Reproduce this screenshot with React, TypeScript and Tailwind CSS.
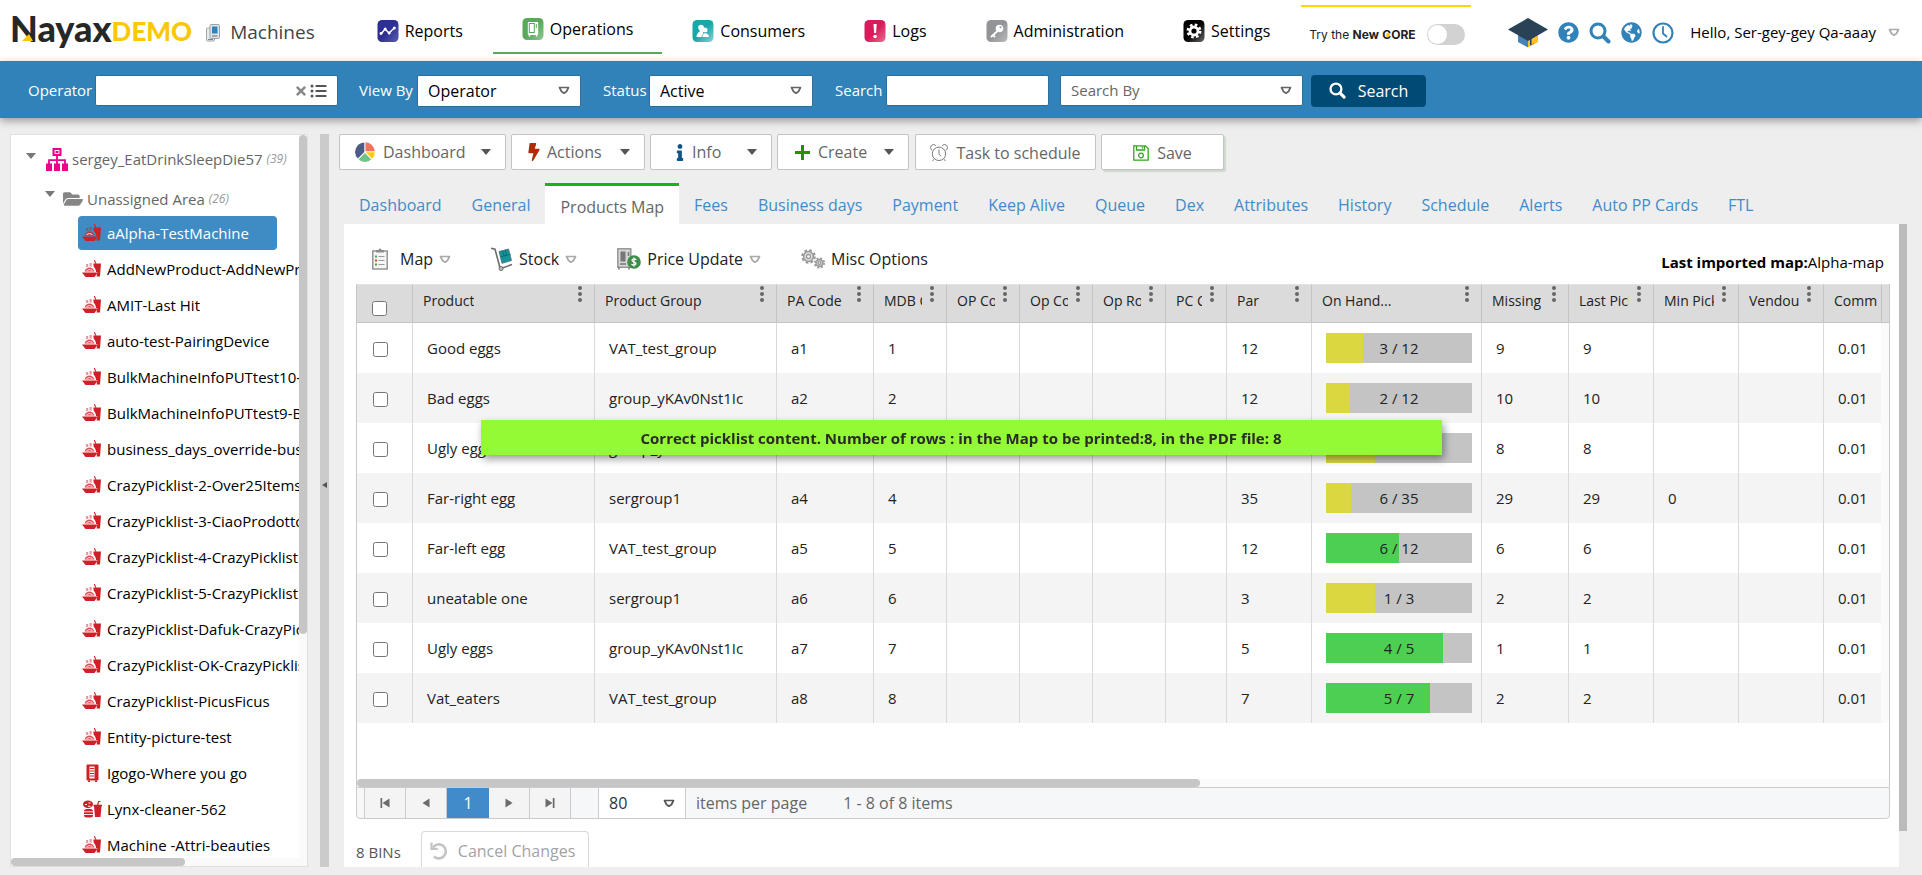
import React from "react";
import { FaBolt, FaFolderOpen, FaGlobeAmericas, FaInfo, FaListUl, FaQuestionCircle, FaTimes } from "react-icons/fa";

type SvgProps = { className?: string };

/* ---------- small shared drawings ---------- */

const CaretOutline = ({ className = "" }: SvgProps) => (
  <svg viewBox="0 0 12 9" className={`h-[9px] w-3 ${className}`} fill="none" stroke="currentColor" strokeWidth="1.7" strokeLinejoin="round" aria-hidden="true">
    <path d="M1.500 1.500h9L8.500 5.500 6 7.200 3.500 5.500z" />
  </svg>
);

const CaretSolid = ({ className = "" }: SvgProps) => (
  <svg viewBox="0 0 10 6" className={`h-1.5 w-2.5 ${className}`} fill="currentColor" aria-hidden="true">
    <path d="M0 0h10L5 6z" />
  </svg>
);

const Magnifier = ({ className = "" }: SvgProps) => (
  <svg viewBox="0 0 22 22" className={className} fill="none" stroke="currentColor" strokeLinecap="round" aria-hidden="true">
    <circle cx="9" cy="9" r="7" strokeWidth="3" />
    <path d="M14.500 14.500l5 5" strokeWidth="4" />
  </svg>
);

const ClockIcon = ({ className = "" }: SvgProps) => (
  <svg viewBox="0 0 22 22" className={className} fill="none" stroke="currentColor" aria-hidden="true">
    <circle cx="11" cy="11" r="9.500" strokeWidth="2.200" />
    <path d="M11 5v6.500l3.500 3" strokeWidth="1.800" strokeLinecap="round" />
  </svg>
);

const GradCap = () => (
  <svg viewBox="0 0 40 30" className="h-[30px] w-10" aria-hidden="true">
    <path d="M10 14v10l10 5.500V18z" fill="#4482b8" />
    <path d="M30 14v10l-10 5.500V18z" fill="#f7c427" />
    <path d="M22 20.500l4-2v7l-4 2z" fill="#2a4256" />
    <path d="M23.500 20.500l4-2v6l-4 2z" fill="#f7c427" />
    <path d="M20 0l20 11.500L20 23 0 11.500z" fill="#2a4256" />
  </svg>
);

const MachinesIcon = () => (
  <svg viewBox="0 0 14 18" className="h-[18px] w-3.5" aria-hidden="true">
    <rect x="0.500" y="4" width="8" height="13" rx="1" fill="#e6ebee" stroke="#a2a8ac" />
    <path d="M2 15.500h5" stroke="#7d868c" />
    <rect x="4" y="0.500" width="9.500" height="14" rx="1.200" fill="#dfe5e9" stroke="#9aa3a9" />
    <rect x="6" y="2.500" width="5.500" height="7" fill="#2b83c0" />
    <path d="M6 12h5.500" stroke="#7d868c" strokeWidth="1.300" />
  </svg>
);

/* ---------- top navigation tiles ---------- */

const Tile = ({ id, from, to, children }: { id: string; from: string; to: string; children: React.ReactNode }) => (
  <svg viewBox="0 0 22 22" className="size-[22px] shrink-0" aria-hidden="true">
    <defs>
      <linearGradient id={id} x1="0" y1="0" x2="1" y2="1">
        <stop offset="0.500" stopColor={from} />
        <stop offset="1" stopColor={to} />
      </linearGradient>
    </defs>
    <rect x="0.500" y="0" width="21" height="22" rx="4.500" fill={`url(#${id})`} />
    {children}
  </svg>
);

const navItems = [
  {
    label: "Reports",
    icon: (
      <Tile id="reports" from="#2d2f92" to="#5a5cae">
        <path d="M4 14l4-5 4 4 5.300-5" fill="none" stroke="#fff" strokeWidth="1.500" />
        <circle cx="4" cy="13.500" r="1.400" fill="#fff" />
        <circle cx="8.200" cy="8.900" r="1.500" fill="#fff" />
        <circle cx="12.200" cy="13" r="1.500" fill="#fff" />
        <circle cx="17.300" cy="8" r="1.500" fill="#fff" />
      </Tile>
    ),
  },
  {
    label: "Operations",
    active: true,
    icon: (
      <Tile id="operations" from="#58a95b" to="#8fc891">
        <rect x="5.800" y="4" width="10.400" height="13" rx="1" fill="#fff" />
        <rect x="7.300" y="5.500" width="5" height="9" fill="none" stroke="#58a95b" strokeWidth="1" />
        <path d="M14.300 6v4" stroke="#58a95b" strokeWidth="1" />
        <path d="M7.500 17v1.500M14.500 17v1.500" stroke="#fff" strokeWidth="1.500" />
      </Tile>
    ),
  },
  {
    label: "Consumers",
    icon: (
      <Tile id="consumers" from="#17a7a7" to="#8ad3d3">
        <circle cx="9" cy="7.500" r="2.800" fill="#fff" />
        <path d="M4.500 17c0-3.500 2-5 3.200-5.600L7.500 9h3l.5 3 1 5z" fill="#fff" />
        <circle cx="13" cy="10" r="2.500" fill="#fff" />
        <path d="M10 17.500c0-3 1.500-4 2.200-4.500h2c1.800.7 3.300 2 3.300 4.500z" fill="#fff" stroke="#17a7a7" strokeWidth="0.600" />
      </Tile>
    ),
  },
  {
    label: "Logs",
    icon: (
      <Tile id="logs" from="#d91a5b" to="#e8708c">
        <path d="M9.500 4h3.200l-.6 9h-2z" fill="#fff" />
        <circle cx="11.100" cy="16.500" r="1.800" fill="#fff" />
      </Tile>
    ),
  },
  {
    label: "Administration",
    icon: (
      <Tile id="administration" from="#929497" to="#babcbe">
        <circle cx="13.500" cy="8.500" r="3.800" fill="#fff" />
        <circle cx="14.500" cy="7.300" r="1" fill="#929497" />
        <path d="M11.500 11l-6 5.500M7 15l1.500 1.500" stroke="#fff" strokeWidth="1.900" strokeLinecap="round" />
      </Tile>
    ),
  },
  {
    label: "Settings",
    icon: (
      <Tile id="settings" from="#000000" to="#6a6a6a">
        <circle cx="11" cy="11" r="6.200" fill="none" stroke="#fff" strokeWidth="2.600" strokeDasharray="2.600 2.270" />
        <circle cx="11" cy="11" r="4" fill="none" stroke="#fff" strokeWidth="2.800" />
      </Tile>
    ),
  },
];

const Header = () => (
  <header className="flex h-[61px] shrink-0 items-start bg-white text-black">
    <a href="#home" className="flex h-14 items-center pl-2.5 font-[Lato] font-black leading-none" aria-label="Nayax DEMO">
      <span className="relative text-[36px] text-[#272727]">
        Nayax
        <svg viewBox="0 0 11 7" className="absolute bottom-[5px] left-3 h-[7px] w-[11px]" aria-hidden="true">
          <path d="M0 7l7-7 4 7z" fill="#fbc707" />
        </svg>
      </span>
      <span className="pt-1.5 text-[26px] text-[#fbc707]">DEMO</span>
    </a>
    <div className="flex h-[61px] items-center gap-2.5 pl-3.5 pt-1 text-[19px] text-[#444]">
      <MachinesIcon />
      <h1>Machines</h1>
    </div>
    <nav className="flex items-start gap-px pl-[33px]">
      {navItems.map((item) =>
        item.active ? (
          <a key={item.label} href="#operations" className="flex h-[54px] items-center gap-1.5 border-b-2 border-[#58a95b] px-[29px] pt-1.5" aria-current="page">
            {item.icon}
            {item.label}
          </a>
        ) : (
          <a key={item.label} href={`#${item.label}`} className="flex h-[61px] items-center gap-1.5 px-[29px]">
            {item.icon}
            {item.label}
          </a>
        ),
      )}
    </nav>
    <div className="ml-auto flex items-start">
      <label className="mt-[5px] flex h-[54px] w-[170px] items-center justify-between border-t-2 border-[#fdd500] pl-2 pr-1.5 pt-0.5 font-[Inter] text-[12px] text-[#222]">
        <span className="whitespace-nowrap pt-0.5">
          Try the <b>New</b>{" "}
          <b className="relative">
            CORE
            <svg viewBox="0 0 4 4" className="absolute left-1 top-1.5 size-1" aria-hidden="true"><circle cx="2" cy="2" r="2" fill="#fdc500" /></svg>
          </b>
        </span>
        <input type="checkbox" role="switch" className="peer sr-only" />
        <span className="flex h-[21px] w-[38px] items-center rounded-full bg-[#d2d2d2] px-px">
          <span className="size-[19px] rounded-full bg-white" />
        </span>
      </label>
      <div className="flex h-[61px] items-center gap-2.5 pl-[37px] pt-1 text-[#3182b9]">
        <a href="#academy" aria-label="Academy"><GradCap /></a>
        <a href="#help" aria-label="Help"><FaQuestionCircle className="size-[21px]" /></a>
        <a href="#find" aria-label="Find"><Magnifier className="size-[22px]" /></a>
        <a href="#language" aria-label="Language"><FaGlobeAmericas className="size-[21px]" /></a>
        <a href="#time" aria-label="Time"><ClockIcon className="size-[22px]" /></a>
      </div>
      <button type="button" className="flex h-[61px] items-center gap-3 whitespace-nowrap pl-4 pr-[22px] pt-1 text-[15px]">
        Hello, Ser-gey-gey Qa-aaay
        <CaretOutline className="text-[#aaa]" />
      </button>
    </div>
  </header>
);

/* ---------- blue filter bar ---------- */

const FilterSelect = ({ id, value, className }: { id: string; value: string; className: string }) => (
  <span className={`relative flex items-center rounded-xs border border-[#2a6f9f] bg-white ${className}`}>
    <select id={id} defaultValue={value} aria-label={value} className="h-full w-full appearance-none bg-transparent pl-2.5 pr-8">
      <option>{value}</option>
    </select>
    <CaretOutline className="pointer-events-none absolute right-2.5 text-[#666]" />
  </span>
);

const FilterBar = () => (
  <form className="z-10 flex h-[57px] shrink-0 items-center bg-[#3182b9] pl-7 pt-0.5 text-[15px] text-white shadow-[0_3px_8px_rgba(0,0,0,0.35)]" onSubmit={(e) => e.preventDefault()}>
    <label htmlFor="operator" className="w-[67px]">Operator</label>
    <span className="relative flex h-[31px] w-[243px] items-center rounded-xs border border-[#2a6f9f] bg-white text-black">
      <input id="operator" className="h-full w-full px-2.5 pr-12 outline-none" />
      <span className="absolute right-2.5 flex items-center gap-0.5 text-[#8a8a8a]">
        <button type="button" aria-label="Clear"><FaTimes className="size-[14px]" /></button>
        <button type="button" aria-label="Choose operator" className="text-[#555]"><FaListUl className="h-4 w-[17px]" /></button>
      </span>
    </span>
    <label htmlFor="viewby" className="ml-[21px] w-[58px]">View By</label>
    <FilterSelect id="viewby" value="Operator" className="h-8 w-[164px] text-[16px] text-black" />
    <label htmlFor="status" className="ml-[22px] w-[46px]">Status</label>
    <FilterSelect id="status" value="Active" className="h-8 w-[164px] text-[16px] text-black" />
    <label htmlFor="search" className="ml-[22px] w-[51px]">Search</label>
    <input id="search" className="h-[31px] w-[163px] rounded-xs border border-[#2a6f9f] bg-white px-2.5 text-black" />
    <FilterSelect id="searchby" value="Search By" className="ml-[11px] h-[31px] w-[243px] text-[#666]" />
    <button type="submit" className="ml-2 flex h-8 w-[115px] items-center justify-center gap-3 rounded-sm bg-[#004b76] text-[16px]">
      <Magnifier className="size-[17px]" />
      Search
    </button>
  </form>
);

/* ---------- machine tree ---------- */

const SnackIcon = () => (
  <svg viewBox="0 0 20 18" className="h-[18px] w-5 shrink-0" fill="#cf2027" aria-hidden="true">
    <path d="M0 12.500h16l-3.500 4.500h-9z" />
    <path d="M2.500 11.500c1-3 3-4 5-4s4 1.500 5 4z" fillOpacity="0.800" />
    <path d="M4 4h2.200v3H4zM7.500 3h2.200v3.500H7.500z" fillOpacity="0.450" />
    <path d="M11.300 3.500h7.700l-1 13h-3.500l1-4.500h-1.500c0-2.500-1-4-2.200-5z" />
    <path d="M12.300 0l1.500 3.500" stroke="#cf2027" strokeWidth="1.100" />
    <path d="M4.500 10.500q3-2 6 0" stroke="#fff" strokeWidth="0.900" fill="none" />
  </svg>
);

const CabinetIcon = () => (
  <svg viewBox="0 0 20 18" className="h-[18px] w-5 shrink-0" aria-hidden="true">
    <rect x="4.500" y="0.500" width="12" height="16" rx="1" fill="#cf2027" />
    <path d="M7 16.500v1.500M14 16.500v1.500" stroke="#cf2027" strokeWidth="2" />
    <rect x="7.500" y="2.500" width="5" height="12" fill="#fff" />
    <path d="M8 4.500h4M8 7h4M8 9.500h4M8 12h4" stroke="#cf2027" strokeWidth="1" />
  </svg>
);

const CoffeeSnackIcon = () => (
  <svg viewBox="0 0 20 18" className="h-[18px] w-5 shrink-0" aria-hidden="true">
    <ellipse cx="6" cy="4.300" rx="5" ry="3.900" fill="#cf2027" />
    <path d="M3 4.500h2M6.500 3h2M6 6.200h2.500" stroke="#fff" strokeWidth="1.100" />
    <rect x="2" y="9" width="9" height="8.500" rx="2.500" fill="#cf2027" />
    <path d="M2 11.800h9M2 14.500h9" stroke="#fff" strokeWidth="0.900" />
    <path d="M12 6h7.500l-1 11h-5.500z" fill="#cf2027" />
    <path d="M15.500 6l1-4.500h2" stroke="#cf2027" strokeWidth="1.200" fill="none" />
    <path d="M11.500 4.700h8.500v1.500h-8.500z" fill="#cf2027" />
  </svg>
);

const machines: { name: string; icon?: "cabinet" | "coffee"; selected?: boolean }[] = [
  { name: "aAlpha-TestMachine", selected: true },
  { name: "AddNewProduct-AddNewProduct" },
  { name: "AMIT-Last Hit" },
  { name: "auto-test-PairingDevice" },
  { name: "BulkMachineInfoPUTtest10-BulkMachine" },
  { name: "BulkMachineInfoPUTtest9-BulkMachine" },
  { name: "business_days_override-business" },
  { name: "CrazyPicklist-2-Over25Items" },
  { name: "CrazyPicklist-3-CiaoProdotto" },
  { name: "CrazyPicklist-4-CrazyPicklist" },
  { name: "CrazyPicklist-5-CrazyPicklist" },
  { name: "CrazyPicklist-Dafuk-CrazyPicklist" },
  { name: "CrazyPicklist-OK-CrazyPicklist" },
  { name: "CrazyPicklist-PicusFicus" },
  { name: "Entity-picture-test" },
  { name: "Igogo-Where you go", icon: "cabinet" },
  { name: "Lynx-cleaner-562", icon: "coffee" },
  { name: "Machine -Attri-beauties" },
];

const Sidebar = () => (
  <aside className="flex w-[298px] shrink-0 flex-col border border-[#e0e0e0] bg-white">
    <div className="flex min-h-0 flex-1">
      <div className="min-w-0 flex-1 overflow-hidden whitespace-nowrap text-[15px]">
        <div className="flex h-[46px] items-center pl-[15px] pt-0.5 text-[#666]">
          <CaretSolid className="mb-1.5 mr-2.5 text-[#777]" />
          <svg viewBox="0 0 22 23" className="h-[23px] w-[22px]" aria-hidden="true">
            <path d="M6.500 0h9v8h-9zM0 15.500h6V23H0zM8 15.500h6V23H8zM16 15.500h6V23h-6z" fill="#ec008c" />
            <path d="M11 8v8M3 16v-3.800h16V16" fill="none" stroke="#ec008c" strokeWidth="1.800" />
            <path d="M9 2.500h4v3H9z" fill="none" stroke="#fff" strokeWidth="1" />
          </svg>
          <span className="ml-1">sergey_EatDrinkSleepDie57</span>
          <i className="ml-1 text-[12px] text-[#999]">(39)</i>
        </div>
        <div className="flex h-[34px] items-center pl-[34px] pt-0.5 text-[#666]">
          <CaretSolid className="mb-2.5 mr-2 text-[#777]" />
          <FaFolderOpen className="h-[18px] w-5 text-[#858585]" />
          <span className="ml-1">Unassigned Area</span>
          <i className="ml-1 text-[12px] text-[#999]">(26)</i>
        </div>
        <ul className="pl-[67px]">
          {machines.map((m) => (
            <li key={m.name} className="flex h-9 items-center">
              <a
                href={`#${m.name}`}
                className={
                  m.selected
                    ? "flex h-[34px] w-[199px] items-center gap-[5px] rounded-sm bg-[#3f8bc4] pl-1 text-white"
                    : "flex h-[34px] items-center gap-[5px] pl-1 text-black"
                }
              >
                {m.icon === "cabinet" ? <CabinetIcon /> : m.icon === "coffee" ? <CoffeeSnackIcon /> : <SnackIcon />}
                {m.name}
              </a>
            </li>
          ))}
        </ul>
      </div>
      <div className="w-2 shrink-0 bg-[#fafafa]">
        <div className="h-[69%] rounded-t-sm rounded-b-sm bg-[#c6c6c6]" />
      </div>
    </div>
    <div className="h-2 shrink-0 bg-[#fafafa]">
      <div className="h-2 w-[174px] rounded-sm bg-[#c6c6c6]" />
    </div>
  </aside>
);

/* ---------- action buttons ---------- */

const PieIcon = () => (
  <svg viewBox="0 0 20 20" className="size-5" aria-hidden="true">
    <path d="M9.300 10V0.500A9.500 9.500 0 0 0 2.900 16.600z" fill="#4d5b86" />
    <path d="M10.500 9.300V0.300a9.500 9.500 0 0 1 9.200 9z" fill="#f0745a" />
    <path d="M10.800 10.300h9a9 9 0 0 1-2.700 6.500z" fill="#fbc916" />
    <path d="M9.900 11l6.400 6.500a9.500 9.500 0 0 1-12.700.1z" fill="#6cc486" />
  </svg>
);

const AlarmIcon = () => (
  <svg viewBox="0 0 18 18" className="size-[18px]" fill="none" stroke="#7a7a7a" strokeWidth="1" aria-hidden="true">
    <circle cx="9" cy="9.800" r="6.700" />
    <path d="M9 5.500v4.800l2 1.800M4 15.200L2.500 17M14 15.200l1.500 1.800" />
    <path d="M1.200 5.500A3 3 0 0 1 5.800 1.600M16.800 5.500a3 3 0 0 0-4.600-3.900M1.200 5.500l1 .8M16.800 5.500l-1 .8" />
  </svg>
);

const SaveIcon = () => (
  <svg viewBox="0 0 16 16" className="size-4" fill="none" stroke="#2fa81c" strokeWidth="1.300" aria-hidden="true">
    <path d="M1.500.8h11l2.700 2.700v11.700H.8V.8z" />
    <path d="M3.500 1v4h8V1M9.500 1.500v2" />
    <circle cx="8" cy="10.500" r="2.300" />
  </svg>
);

const PlusIcon = () => (
  <svg viewBox="0 0 15 15" className="size-[15px]" aria-hidden="true">
    <path d="M7.500 0v15M0 7.500h15" stroke="#258f0a" strokeWidth="3" />
  </svg>
);

const ActionButtons = () => {
  const base = "flex h-9 items-center rounded-xs border border-[#c3c3c3] bg-white text-[16px] text-[#666]";
  return (
    <div className="flex gap-[5px] whitespace-nowrap">
      <button type="button" className={`${base} w-[167px] pl-[15px]`}>
        <PieIcon /><span className="ml-2">Dashboard</span><CaretSolid className="ml-auto mr-3.5 text-[#555]" />
      </button>
      <button type="button" className={`${base} w-[134px] pl-[15px]`}>
        <FaBolt className="h-[18px] w-3.5 text-[#b02b05]" /><span className="ml-1.5">Actions</span><CaretSolid className="ml-auto mr-3.5 text-[#555]" />
      </button>
      <button type="button" className={`${base} w-[122px] pl-[25px]`}>
        <FaInfo className="h-[17px] w-2 text-[#0c5584]" /><span className="ml-2">Info</span><CaretSolid className="ml-auto mr-3.5 text-[#555]" />
      </button>
      <button type="button" className={`${base} w-[132px] pl-[17px]`}>
        <PlusIcon /><span className="ml-2">Create</span><CaretSolid className="ml-auto mr-3.5 text-[#555]" />
      </button>
      <button type="button" className={`${base} ml-px w-[181px] justify-center gap-2 pt-0.5`}>
        <AlarmIcon />Task to schedule
      </button>
      <button type="button" className={`${base} w-[123px] justify-center gap-2 pt-0.5 shadow-[2px_2px_1px_#cfd8cf]`}>
        <SaveIcon />Save
      </button>
    </div>
  );
};

/* ---------- tabs ---------- */

const tabs = ["Dashboard", "General", "Products Map", "Fees", "Business days", "Payment", "Keep Alive", "Queue", "Dex", "Attributes", "History", "Schedule", "Alerts", "Auto PP Cards", "FTL"];

const Tabs = () => (
  <nav className="mt-[13px] flex h-[41px] items-stretch whitespace-nowrap pl-[5px] text-[16px]">
    {tabs.map((tab) =>
      tab === "Products Map" ? (
        <a key={tab} href="#products-map" aria-current="page" className="flex items-center border-t-3 border-[#15b80c] bg-white px-[15px] pt-1 text-[#666]">
          {tab}
        </a>
      ) : (
        <a key={tab} href={`#${tab}`} className="flex items-center px-[15px] pt-0.5 text-[#428bca]">
          {tab}
        </a>
      ),
    )}
  </nav>
);

/* ---------- product map toolbar ---------- */

const ClipboardIcon = () => (
  <svg viewBox="0 0 16 22" className="h-[22px] w-4" aria-hidden="true">
    <rect x="0.800" y="3" width="14.400" height="18" fill="#f6f6f6" stroke="#8d8d8d" strokeWidth="1.400" />
    <path d="M4 4.500V2h2.500a1.500 1.500 0 0 1 3 0H12v2.500z" fill="#8d8d8d" />
    <path d="M6.500 8.500h6M6.500 12.500h6M6.500 16.500h6" stroke="#9a9a9a" strokeWidth="1.200" />
    <path d="M3 8.500h2M3 16.500h2" stroke="#3aa935" strokeWidth="2" />
    <path d="M3 12.500h2" stroke="#e2382b" strokeWidth="2" />
  </svg>
);

const TrolleyIcon = () => (
  <svg viewBox="0 0 22 24" className="h-6 w-[22px]" aria-hidden="true">
    <path d="M0 1.200l4 1 5 18.500M10 21.500l11-4" fill="none" stroke="#6d6d6d" strokeWidth="1.600" />
    <path d="M8 4.500l9.500-2.500 3 11.500-9.500 2.800z" fill="#15959b" stroke="#55757a" strokeWidth="0.900" />
    <path d="M11.500 4l1.500 5 2.500-.8-1.200-5M9.500 10l10-2.800" fill="none" stroke="#0b6a70" strokeWidth="0.900" />
    <circle cx="10" cy="21.500" r="2" fill="#bbb" stroke="#6d6d6d" />
  </svg>
);

const PriceIcon = () => (
  <svg viewBox="0 0 24 22" className="h-[22px] w-6" aria-hidden="true">
    <rect x="0.800" y="0.800" width="13" height="18.500" fill="#d5d5d5" stroke="#8b8b8b" strokeWidth="1.300" />
    <rect x="3.500" y="3.500" width="5" height="10" fill="#777" />
    <path d="M11.500 4v4M3 16h6M2 19.500v2M12 19.500v2" stroke="#777" strokeWidth="1.500" />
    <circle cx="17" cy="14" r="6.800" fill="#3b8e48" />
    <path d="M19.500 11.800q-2.500-1.500-4-.4-1.300 1.400 1.400 2.500 3 1 1.700 2.600-1.800 1.300-4.200-.3M17 9.500v9" fill="none" stroke="#fff" strokeWidth="1.300" />
  </svg>
);

const GearsIcon = () => (
  <svg viewBox="0 0 24 20" className="h-5 w-6" fill="none" stroke="#999" aria-hidden="true">
    <circle cx="7.500" cy="7.500" r="6.300" strokeWidth="2" strokeDasharray="2.600 2.350" />
    <circle cx="7.500" cy="7.500" r="4.900" strokeWidth="1.500" fill="#ddd" />
    <circle cx="7.500" cy="7.500" r="2" strokeWidth="1.300" fill="#fff" />
    <circle cx="18.500" cy="14" r="4.700" strokeWidth="1.800" strokeDasharray="2 1.700" />
    <circle cx="18.500" cy="14" r="3.500" strokeWidth="1.400" fill="#ccc" />
    <circle cx="18.500" cy="14" r="1.300" strokeWidth="1.200" fill="#fff" />
  </svg>
);

const MapToolbar = () => (
  <div className="flex h-[60px] items-center pl-4 pt-2.5 text-[16px] text-[#222]">
    <button type="button" className="flex items-center gap-1.5">
      <ClipboardIcon /><span className="ml-1.5">Map</span><CaretOutline className="text-[#aaa]" />
    </button>
    <button type="button" className="ml-10 flex items-center gap-1.5">
      <TrolleyIcon />Stock<CaretOutline className="text-[#aaa]" />
    </button>
    <button type="button" className="ml-10 flex items-center gap-1.5">
      <PriceIcon />Price Update<CaretOutline className="text-[#aaa]" />
    </button>
    <button type="button" className="ml-10 flex items-center gap-1.5">
      <GearsIcon />Misc Options
    </button>
    <p className="ml-auto pr-1.5 pt-1.5 text-[15px] text-black">
      <b>Last imported map:</b>Alpha-map
    </p>
  </div>
);

/* ---------- product grid ---------- */

const columns = [
  { label: "Product", width: "w-[182px]" },
  { label: "Product Group", width: "w-[182px]" },
  { label: "PA Code", width: "w-[97px]" },
  { label: "MDB Code", width: "w-[73px]" },
  { label: "OP Code", width: "w-[73px]" },
  { label: "Op Code", width: "w-[73px]" },
  { label: "Op Row", width: "w-[73px]" },
  { label: "PC Code", width: "w-[61px]" },
  { label: "Par", width: "w-[85px]" },
  { label: "On Hand...", width: "w-[170px]" },
  { label: "Missing", width: "w-[87px]" },
  { label: "Last Pick", width: "w-[85px]" },
  { label: "Min Pick", width: "w-[85px]" },
  { label: "Vendout", width: "w-[85px]" },
];

const rows = [
  { product: "Good eggs", group: "VAT_test_group", code: "a1", mdb: 1, par: 12, onHand: 3, min: "" },
  { product: "Bad eggs", group: "group_yKAv0Nst1Ic", code: "a2", mdb: 2, par: 12, onHand: 2, min: "" },
  { product: "Ugly eggs", group: "group_yKAv0Nst1Ic", code: "a3", mdb: 3, par: 12, onHand: 4, min: "" },
  { product: "Far-right egg", group: "sergroup1", code: "a4", mdb: 4, par: 35, onHand: 6, min: "0" },
  { product: "Far-left egg", group: "VAT_test_group", code: "a5", mdb: 5, par: 12, onHand: 6, min: "" },
  { product: "uneatable one", group: "sergroup1", code: "a6", mdb: 6, par: 3, onHand: 1, min: "" },
  { product: "Ugly eggs", group: "group_yKAv0Nst1Ic", code: "a7", mdb: 7, par: 5, onHand: 4, min: "" },
  { product: "Vat_eaters", group: "VAT_test_group", code: "a8", mdb: 8, par: 7, onHand: 5, min: "" },
];

const ColumnMenu = () => (
  <svg viewBox="0 0 4 16" className="h-4 w-1" fill="#666" aria-hidden="true">
    <circle cx="2" cy="2" r="2" />
    <circle cx="2" cy="8" r="2" />
    <circle cx="2" cy="14" r="2" />
  </svg>
);

const StockBar = ({ value, total }: { value: number; total: number }) => (
  <div className="relative flex h-[30px] w-[146px] items-center justify-center bg-[#c4c4c4]">
    <div
      className={`absolute inset-y-0 left-0 ${value / total >= 0.5 ? "bg-[#4dd052]" : "bg-[#dbd83f]"}`}
      style={{ width: `${(value / total) * 100}%` }}
    />
    <span className="relative">{value} / {total}</span>
  </div>
);

const cell = "border-l border-[#d9d9d9] py-0 pl-3.5";

const ProductGrid = () => (
  <div className="flex min-h-0 flex-1 flex-col border-l border-[#c9c9c9]">
    <div className="min-h-0 flex-1 overflow-hidden border-r border-[#c9c9c9]">
      <table className="w-full table-fixed border-separate border-spacing-0 text-[15px] text-[#222]">
        <thead>
          <tr className="h-[39px] bg-[#dbdbdb] text-left text-[14px]">
            <th className="w-[55px] border-b border-t border-b-[#c4c4c4] border-t-[#e4e4e4] p-0 pl-[15px] pt-2.5 align-middle">
              <input type="checkbox" aria-label="Select all rows" className="block size-[15px]" />
            </th>
            {columns.map((c, i) => (
              <th key={i} scope="col" className={`${c.width} border-b border-l border-t border-b-[#c4c4c4] border-l-[#c4c4c4] border-t-[#e4e4e4] p-0 align-top font-normal`}>
                <div className="flex items-start justify-between pl-2.5 pr-3">
                  <span className="overflow-hidden whitespace-nowrap pt-[5px]">{c.label}</span>
                  <button type="button" aria-label={`${c.label} menu`} className="shrink-0 pl-2 pt-px"><ColumnMenu /></button>
                </div>
              </th>
            ))}
            <th scope="col" className="overflow-hidden border-b border-l border-t border-b-[#c4c4c4] border-l-[#c4c4c4] border-t-[#e4e4e4] p-0 pl-2.5 pt-[5px] align-top font-normal">Comm</th>
            <th className="w-2 border-b border-l border-t border-b-[#c4c4c4] border-l-[#c4c4c4] border-t-[#e4e4e4] p-0" aria-label="Scroll" />
          </tr>
        </thead>
        <tbody>
          {rows.map((r, i) => (
            <tr key={r.code} className={i % 2 ? "h-[50px] bg-[#f4f4f4]" : "h-[50px] bg-white"}>
              <td className="p-0 pl-4 pt-0.5">
                <input type="checkbox" aria-label={`Select ${r.product} ${r.code}`} className="block size-[15px]" />
              </td>
              <td className={cell}>{r.product}</td>
              <td className={cell}>{r.group}</td>
              <td className={cell}>{r.code}</td>
              <td className={cell}>{r.mdb}</td>
              <td className={cell} />
              <td className={cell} />
              <td className={cell} />
              <td className={cell} />
              <td className={cell}>{r.par}</td>
              <td className={cell}><StockBar value={r.onHand} total={r.par} /></td>
              <td className={cell}>{r.par - r.onHand}</td>
              <td className={cell}>{r.par - r.onHand}</td>
              <td className={cell}>{r.min}</td>
              <td className={cell} />
              <td className={cell}>0.01</td>
              <td className="bg-[#fafafa] p-0" />
            </tr>
          ))}
        </tbody>
      </table>
    </div>
    <div className="h-2 shrink-0 border-r border-[#c9c9c9] bg-[#fafafa]">
      <div className="h-2 w-[55%] rounded-sm bg-[#c6c6c6]" />
    </div>
  </div>
);

const PagerArrow = ({ d, label }: { d: string; label: string }) => (
  <button type="button" aria-label={label} className="flex w-[41px] items-center justify-center border-r border-[#ccc] bg-[#f4f4f4]">
    <svg viewBox="0 0 10 10" className="size-2.5" fill="#6b6b6b" aria-hidden="true"><path d={d} /></svg>
  </button>
);

const Pager = () => (
  <div className="flex h-8 shrink-0 items-stretch rounded-b-sm border border-[#ccc] bg-[#f5f7f9] text-[16px] text-[#666]">
    <div className="ml-[7px] flex border-l border-[#ccc]">
      <PagerArrow label="First page" d="M0.500 0h1.700v10H.5zM9.500 0.500v9L2.500 5z" />
      <PagerArrow label="Previous page" d="M8.500 0.500v9L1.500 5z" />
      <button type="button" aria-current="page" className="w-[42px] bg-[#428bca] text-white">1</button>
      <PagerArrow label="Next page" d="M1.500 0.500v9L8.500 5z" />
      <PagerArrow label="Last page" d="M0.500 0.500v9L7.500 5zM7.800 0h1.700v10H7.800z" />
    </div>
    <span className="relative ml-[27px] flex w-[88px] items-center border-x border-[#ccc] bg-white text-[#333]">
      <select aria-label="Page size" defaultValue="80" className="h-full w-full appearance-none bg-transparent pl-2.5">
        <option>80</option>
      </select>
      <CaretOutline className="pointer-events-none absolute right-2.5 text-[#555]" />
    </span>
    <span className="flex items-center pl-2.5">items per page</span>
    <span className="flex items-center pl-9">1 - 8 of 8 items</span>
  </div>
);

const UndoIcon = () => (
  <svg viewBox="0 0 18 18" className="size-[18px]" fill="none" stroke="#c4c4c4" strokeWidth="2.600" aria-hidden="true">
    <path d="M3 5.500A7 7 0 1 1 4 14.500" />
    <path d="M1.500 0.500v6.300h6.300" strokeWidth="2.200" />
  </svg>
);

export default function App() {
  return (
    <div className="flex h-screen min-h-[600px] flex-col overflow-hidden bg-[#eee] font-['Open_Sans','Noto_Sans',sans-serif] text-[16px]">
      <Header />
      <FilterBar />
      <div className="flex min-h-0 flex-1 pb-2 pl-2.5 pt-4">
        <Sidebar />
        <div className="ml-3 flex w-[9px] shrink-0 items-center bg-[#cbcbcb]" role="separator">
          <svg viewBox="0 0 5 6" className="mb-8 ml-0.5 h-1.5 w-[5px]" fill="#555" aria-hidden="true"><path d="M5 0v6L0 3z" /></svg>
        </div>
        <main className="ml-2.5 flex min-w-0 flex-1 flex-col pr-[15px]">
          <ActionButtons />
          <Tabs />
          <div className="ml-[5px] flex min-h-0 flex-1">
            <section className="flex min-w-0 flex-1 flex-col bg-white pl-3 pr-[9px]">
              <MapToolbar />
              <ProductGrid />
              <Pager />
              <div className="flex h-12 shrink-0 items-end gap-5">
                <span className="pb-1 text-[15px] text-[#555]">8 BINs</span>
                <button type="button" disabled className="flex h-9 w-[168px] items-center gap-2.5 whitespace-nowrap rounded-t-sm border border-b-0 border-[#d9d9d9] pl-2 pt-0.5 text-[16px] text-[#a3a3a3]">
                  <UndoIcon />Cancel Changes
                </button>
              </div>
            </section>
            <div className="w-2 shrink-0">
              <div className="h-[607px] max-h-full bg-[#bbb]" />
            </div>
          </div>
        </main>
      </div>
      <div role="status" className="fixed left-1/4 top-[48%] z-20 flex h-[35px] w-1/2 items-center justify-center bg-[#93fa35] pt-0.5 text-[15px] font-bold text-[#2a2a2a] shadow-[2px_4px_8px_rgba(0,0,0,0.4)]">
        Correct picklist content. Number of rows : in the Map to be printed:8, in the PDF file: 8
      </div>
    </div>
  );
}
